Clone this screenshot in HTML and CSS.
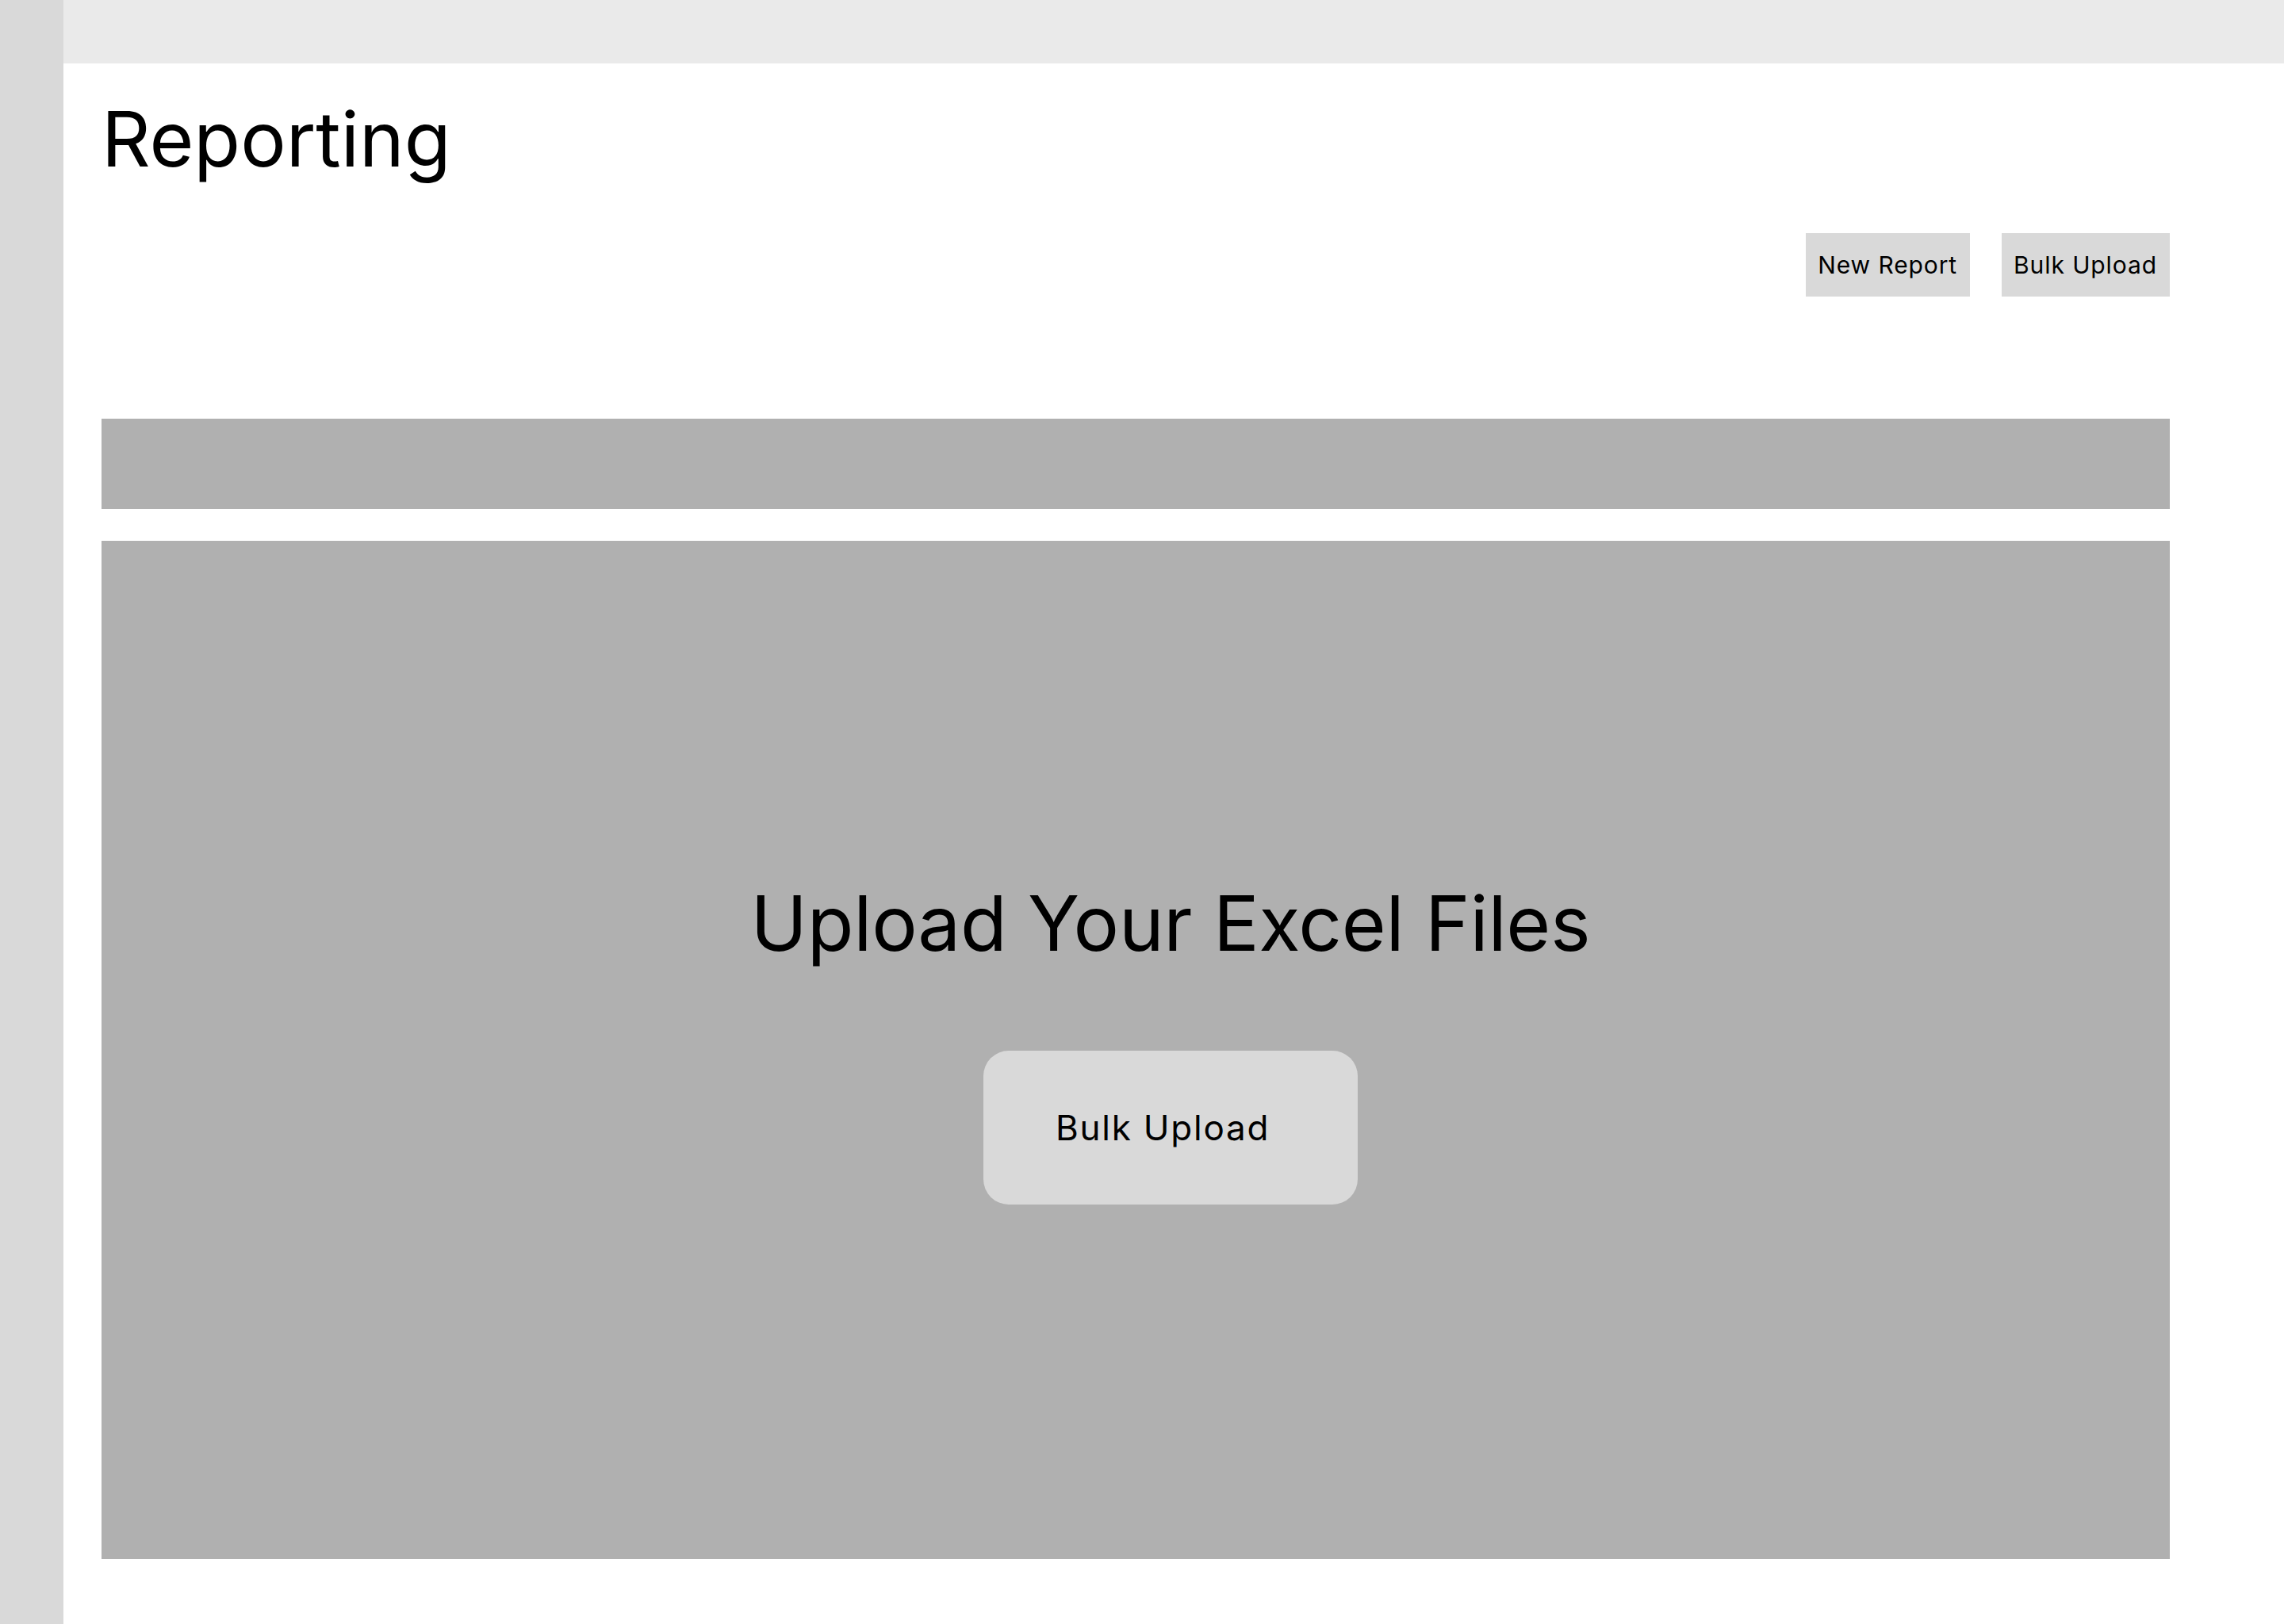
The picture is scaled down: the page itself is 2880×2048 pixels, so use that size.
FILE: index.html
```html
<!DOCTYPE html>
<html lang="en">
<head>
<meta charset="UTF-8">
<meta name="viewport" content="width=device-width, initial-scale=1.0">
<title>Reporting</title>
<link rel="stylesheet" href="styles.css">
</head>
<body>
<div class="app">
    <div class="sidebar"></div>
    <div class="main">
        <div class="topbar"></div>
        <div class="content">
            <h1 class="pageTitle">Reporting</h1>
            <div class="actions">
                <button class="smallBtn">New Report</button>
                <button class="smallBtn">Bulk Upload</button>
            </div>
            <div class="filterBar"></div>
            <div class="uploadPanel">
                <h2 class="uploadTitle">Upload Your Excel Files</h2>
                <button class="uploadBtn">Bulk Upload</button>
            </div>
        </div>
    </div>
</div>
</body>
</html>
```

FILE: styles.css
```css
    body, html {
        height: 100%;
        margin: 0;
        font-family: Inter, "Noto Sans", sans-serif;
        background-color: #ffffff;
        overflow: hidden;
    }
    .app {
        display: flex;
        height: 100vh;
    }
    .sidebar {
        width: 80px;
        flex-shrink: 0;
        background-color: #d9d9d9;
    }
    .main {
        flex: 1;
        display: flex;
        flex-direction: column;
    }
    .topbar {
        height: 80px;
        background-color: #eaeaea;
    }
    .content {
        padding: 0 144px 0 48px;
        display: flex;
        flex-direction: column;
    }
    .pageTitle {
        margin: 37px 0 0 0;
        font-size: 96px;
        font-weight: 400;
        line-height: 116px;
        color: #000000;
    }
    .actions {
        display: flex;
        justify-content: flex-end;
        gap: 40px;
        margin-top: 61px;
    }
    .smallBtn {
        height: 80px;
        padding: 0 16px 0 15px;
        border: 0;
        border-radius: 0;
        background-color: #d9d9d9;
        color: #000000;
        font-family: Inter, "Noto Sans", sans-serif;
        font-size: 30px;
        letter-spacing: 0.9px;
    }
    .filterBar {
        height: 114px;
        margin-top: 154px;
        background-color: #b0b0b0;
    }
    .uploadPanel {
        height: 1284px;
        box-sizing: border-box;
        margin-top: 40px;
        padding: 0 0 24px 88px;
        background-color: #b0b0b0;
        display: flex;
        flex-direction: column;
        justify-content: center;
        align-items: center;
    }
    .uploadTitle {
        margin: 0;
        font-size: 96px;
        font-weight: 400;
        line-height: 116px;
        letter-spacing: -0.3px;
        color: #000000;
    }
    .uploadBtn {
        width: 472px;
        height: 194px;
        margin-top: 103px;
        padding: 0 0 0 91px;
        text-align: left;
        border: 0;
        border-radius: 32px;
        background-color: #d9d9d9;
        color: #000000;
        font-family: Inter, "Noto Sans", sans-serif;
        font-size: 44px;
        letter-spacing: 0.04em;
    }
```
